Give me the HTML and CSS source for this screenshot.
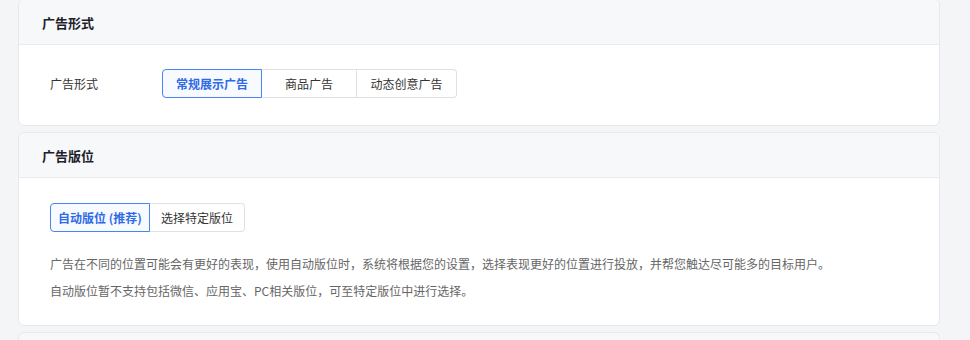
FILE: index.html
```html
<!DOCTYPE html>
<html lang="zh-CN">
<head>
<meta charset="utf-8">
<link rel="stylesheet" href="styles.css">
</head>
<body>
<div class="page">
  <section class="card card-first">
    <div class="card-head">广告形式</div>
    <div class="card-body body-form">
      <div class="form-row">
        <div class="label">广告形式</div>
        <div class="seg">
          <button class="seg-btn active w100">常规展示广告</button>
          <button class="seg-btn w95">商品广告</button>
          <button class="seg-btn w100">动态创意广告</button>
        </div>
      </div>
    </div>
  </section>
  <section class="card">
    <div class="card-head">广告版位</div>
    <div class="card-body body-place">
      <div class="seg">
        <button class="seg-btn active w100">自动版位 (推荐)</button>
        <button class="seg-btn w95">选择特定版位</button>
      </div>
      <div class="desc">
        <p>广告在不同的位置可能会有更好的表现，使用自动版位时，系统将根据您的设置，选择表现更好的位置进行投放，并帮您触达尽可能多的目标用户。</p>
        <p>自动版位暂不支持包括微信、应用宝、PC相关版位，可至特定版位中进行选择。</p>
      </div>
    </div>
  </section>
  <section class="card card-last"></section>
</div>
</body>
</html>
```
FILE: styles.css
```css
* { box-sizing: border-box; }
html, body {
  margin: 0;
  padding: 0;
  height: 340px;
  background: #f4f5f7;
  font-family: "Noto Sans CJK SC", "Noto Sans", sans-serif;
  overflow: hidden;
}
.page {
  width: 922px;
  margin-left: 18px;
  display: flex;
  flex-direction: column;
  gap: 6px;
}
.card {
  background: #fff;
  border: 1px solid #e6e8ee;
  border-radius: 6px;
  overflow: hidden;
}
.card-first { margin-top: -1px; }
.card-head {
  height: 45px;
  background: #f7f8fa;
  border-bottom: 1px solid #e9ebf0;
  padding-left: 23px;
  display: flex;
  align-items: center;
  font-size: 13px;
  font-weight: 700;
  color: #1d2129;
}
.card-last {
  height: 8px;
  background: #f7f8fa;
  border-bottom: none;
  border-radius: 6px 6px 0 0;
}
.body-form {
  height: 80px;
  padding: 24px 0 0 31px;
}
.form-row {
  display: flex;
  align-items: center;
}
.label {
  width: 112px;
  font-size: 12px;
  color: #333;
}
.seg {
  display: flex;
}
.seg-btn {
  height: 29px;
  padding: 0;
  margin: 0;
  font-family: inherit;
  font-size: 12px;
  color: #333;
  background: #fff;
  border: 1px solid #dfe1e6;
  border-left: none;
  text-align: center;
}
.seg-btn:first-child {
  border-left: 1px solid #dfe1e6;
  border-radius: 4px 0 0 4px;
}
.seg-btn:last-child { border-radius: 0 4px 4px 0; }
.seg-btn.active {
  border: 1px solid #4a84f4;
  background: #f7faff;
  color: #2f6ae6;
  font-weight: 700;
}
.w100 { width: 100px; }
.w95 { width: 95px; }
.body-place {
  height: 147px;
  padding: 25px 0 0 31px;
}
.desc {
  margin-top: 18px;
  font-size: 12px;
  line-height: 27px;
  color: #666;
}
.desc p { margin: 0; }
```
